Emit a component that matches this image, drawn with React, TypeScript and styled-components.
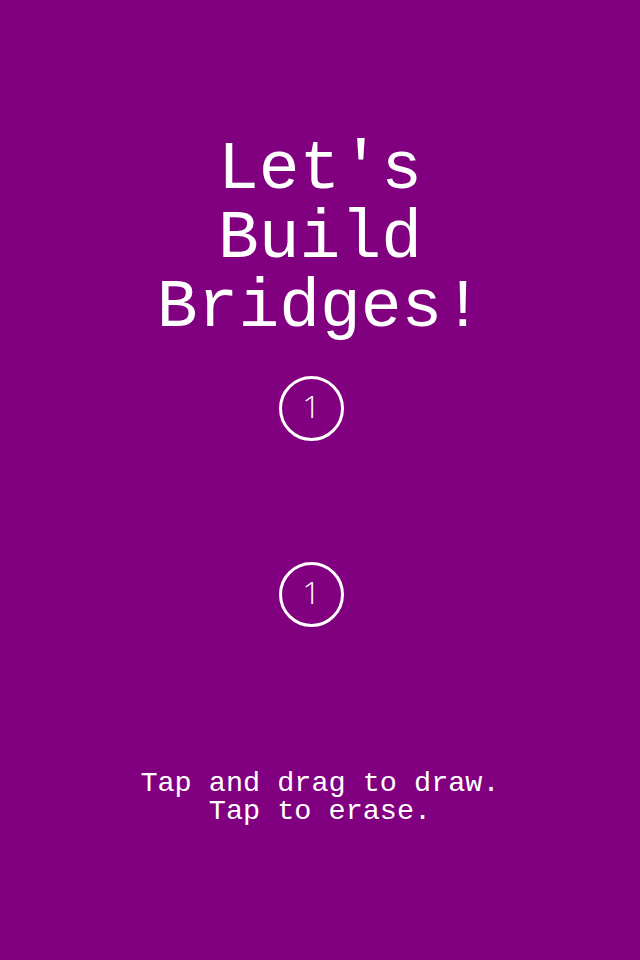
import { FC } from 'react';
import styled, { createGlobalStyle } from 'styled-components';

const GlobalStyle = createGlobalStyle`
	html,
	body {
		margin: 0;
		padding: 0;
		background: #800080;
	}
`;

type BubbleProps = {
	count: number;
};

const Bubble: FC<BubbleProps> = ({ count }) => (
	<Circle>
		<Count>{count}</Count>
	</Circle>
);

const App: FC = () => (
	<>
		<GlobalStyle />
		<Screen>
			<Title>{"Let's\nBuild\nBridges!"}</Title>
			<Board>
				<Bubble count={1} />
				<Bubble count={1} />
			</Board>
			<Hint>{'Tap and drag to draw.\nTap to erase.'}</Hint>
		</Screen>
	</>
);

const Screen = styled.main`
	display: flex;
	flex-direction: column;
	align-items: center;
	box-sizing: border-box;
	width: 640px;
	height: 960px;
	padding-top: 135px;
	background: #800080;
	color: #ffffff;
	font-family: 'Liberation Mono', 'Courier New', monospace;
`;

const Title = styled.h1`
	margin: 0;
	font-size: 68px;
	font-weight: normal;
	line-height: 69px;
	text-align: center;
	white-space: pre-line;
`;

const Board = styled.section`
	display: flex;
	flex-direction: column;
	align-items: center;
	gap: 121px;
	margin-top: 34px;
	margin-left: -17px;
`;

const Circle = styled.div`
	display: flex;
	align-items: center;
	justify-content: center;
	box-sizing: border-box;
	width: 65px;
	height: 65px;
	border: 3px solid #ffffff;
	border-radius: 50%;
`;

const Count = styled.span`
	margin-top: -5px;
	font-family: 'Open Sans', 'Liberation Sans', sans-serif;
	font-weight: 300;
	font-size: 32px;
	line-height: 1;
`;

const Hint = styled.p`
	margin: 143px 0 0;
	font-size: 28.5px;
	line-height: 28px;
	text-align: center;
	white-space: pre-line;
`;

export default App;
